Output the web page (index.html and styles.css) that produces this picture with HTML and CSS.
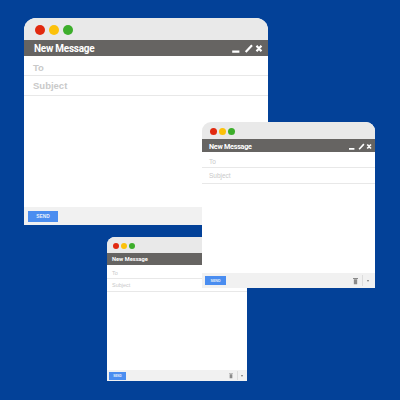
FILE: index.html
```html
<!DOCTYPE html>
<html lang="en">
<head>
    <meta charset="UTF-8">
    <title>New Message</title>
    <link rel="stylesheet" href="styles.css">
</head>
<body>
    <div class="window large">
        <div class="top"><span class="dot red"></span><span class="dot yellow"></span><span class="dot green"></span></div>
        <div class="bar">
            <span class="bar-title">New Message</span>
            <svg class="bar-icons" viewBox="0 0 34 10"><path d="M0 8.500h8M15 9l7-7.500M27 2l5.500 6M32.500 2L27 8"/></svg>
        </div>
        <div class="field">To</div>
        <div class="field">Subject</div>
        <div class="body"></div>
        <div class="foot"><span class="send">SEND</span></div>
    </div>

    <div class="window small">
        <div class="top"><span class="dot red"></span><span class="dot yellow"></span><span class="dot green"></span></div>
        <div class="bar">
            <span class="bar-title">New Message</span>
            <svg class="bar-icons" viewBox="0 0 34 10"><path d="M0 8.500h8M15 9l7-7.500M27 2l5.500 6M32.500 2L27 8"/></svg>
        </div>
        <div class="field">To</div>
        <div class="field">Subject</div>
        <div class="body"></div>
        <div class="foot">
            <span class="send">SEND</span>
            <svg class="trash" viewBox="0 0 6 8"><path d="M0 0.500h6v1H0zM1 2h4v6H1z"/></svg>
            <span class="more"></span>
        </div>
    </div>

    <div class="window medium">
        <div class="top"><span class="dot red"></span><span class="dot yellow"></span><span class="dot green"></span></div>
        <div class="bar">
            <span class="bar-title">New Message</span>
            <svg class="bar-icons" viewBox="0 0 34 10"><path d="M0 8.500h8M15 9l7-7.500M27 2l5.500 6M32.500 2L27 8"/></svg>
        </div>
        <div class="field">To</div>
        <div class="field">Subject</div>
        <div class="body"></div>
        <div class="foot">
            <span class="send">SEND</span>
            <svg class="trash" viewBox="0 0 6 8"><path d="M0 0.500h6v1H0zM1 2h4v6H1z"/></svg>
            <span class="more"></span>
        </div>
    </div>
</body>
</html>
```

FILE: styles.css
```css
body{
    margin:0;
    width:400px;
    height:400px;
    overflow:hidden;
    position:relative;
    background-color:#034198;
    font-family:"Liberation Sans", Arial, sans-serif;
}
.window{
    position:absolute;
    display:flex;
    flex-direction:column;
    background-color:#fff;
    overflow:hidden;
}
.large{
    left:24px; top:18px; width:244px; height:207px;
    border-radius:12px 12px 0 0;
}
.medium{
    left:202px; top:122px; width:173px; height:166px;
    border-radius:9px 9px 0 0;
}
.small{
    left:107px; top:237px; width:140px; height:144px;
    border-radius:8px 8px 0 0;
}

.top{
    display:flex;
    align-items:center;
    box-sizing:border-box;
    background-color:#e9e9e9;
}
.large .top{ height:22px; padding:2px 0 0 11px; gap:4px; }
.medium .top{ height:17px; padding:2px 0 0 8px; gap:2px; }
.small .top{ height:16px; padding:2px 0 0 6px; gap:2px; }
.dot{
    border-radius:50%;
}
.large .dot{ width:10px; height:10px; }
.medium .dot{ width:7px; height:7px; }
.small .dot{ width:6px; height:6px; }
.red{ background-color:#e1290f; }
.yellow{ background-color:#fcc10a; }
.green{ background-color:#3dae2b; }

.bar{
    display:flex;
    align-items:center;
    justify-content:space-between;
    box-sizing:border-box;
    background-color:#666462;
    color:#fff;
    font-family:Roboto, "Liberation Sans", sans-serif;
    font-weight:bold;
}
.large .bar{ height:16px; padding:1px 5px 0 10px; font-size:10px; letter-spacing:-0.250px; }
.medium .bar{ height:13px; padding:2px 3px 0 7px; font-size:7.200px; letter-spacing:-0.250px; }
.small .bar{ height:12px; padding:0 3px 0 5px; font-size:5.700px; }
.bar-icons{
    fill:none;
    stroke:#fff;
    stroke-width:2.400;
}
.large .bar-icons{ width:31px; height:9px; }
.medium .bar-icons{ width:23px; height:7px; }
.small .bar-icons{ width:18px; height:6px; }

.field{
    display:flex;
    align-items:center;
    box-sizing:border-box;
    border-bottom:1px solid #e8e8e8;
    color:#c9c9c9;
}
.large .field{ height:20px; padding-left:9px; font-size:9.500px; font-weight:bold; }
.large .field:nth-of-type(3){ padding-top:4px; }
.medium .field{ height:16px; padding-left:7px; font-size:6.500px; }
.medium .field:nth-of-type(3){ padding-top:3px; }
.small .field{ height:13.500px; padding-left:5px; font-size:5.500px; }
.small .field:nth-of-type(3){ padding-top:3px; }

.body{
    flex:1;
}

.foot{
    display:flex;
    align-items:center;
    background-color:#f1f1f1;
}
.large .foot{ height:18px; padding-left:4px; }
.medium .foot{ height:15px; padding-left:3px; }
.small .foot{ height:11px; padding-left:2px; }
.send{
    display:flex;
    align-items:center;
    justify-content:center;
    background-color:#4a8df0;
    color:#e8effa;
    font-weight:bold;
}
.large .send{ width:30px; height:11px; font-size:4.800px; }
.medium .send{ width:21px; height:9px; font-size:3.600px; }
.small .send{ width:17px; height:8px; font-size:3px; }

.trash{
    fill:#8a8a8a;
    margin-left:auto;
}
.medium .trash{ width:5px; height:8px; }
.small .trash{ width:4px; height:7px; }
.more{
    border-left:1px solid #dcdcdc;
    align-self:stretch;
    position:relative;
}
.medium .more{ margin:2px 0 2px 4px; width:12px; }
.small .more{ margin:1px 0 1px 4px; width:9px; }
.more::after{
    content:"";
    position:absolute;
    left:50%;
    top:50%;
    margin:-1px 0 0 -2px;
    border-left:1.500px solid transparent;
    border-right:1.500px solid transparent;
    border-top:2px solid #777;
}
```
